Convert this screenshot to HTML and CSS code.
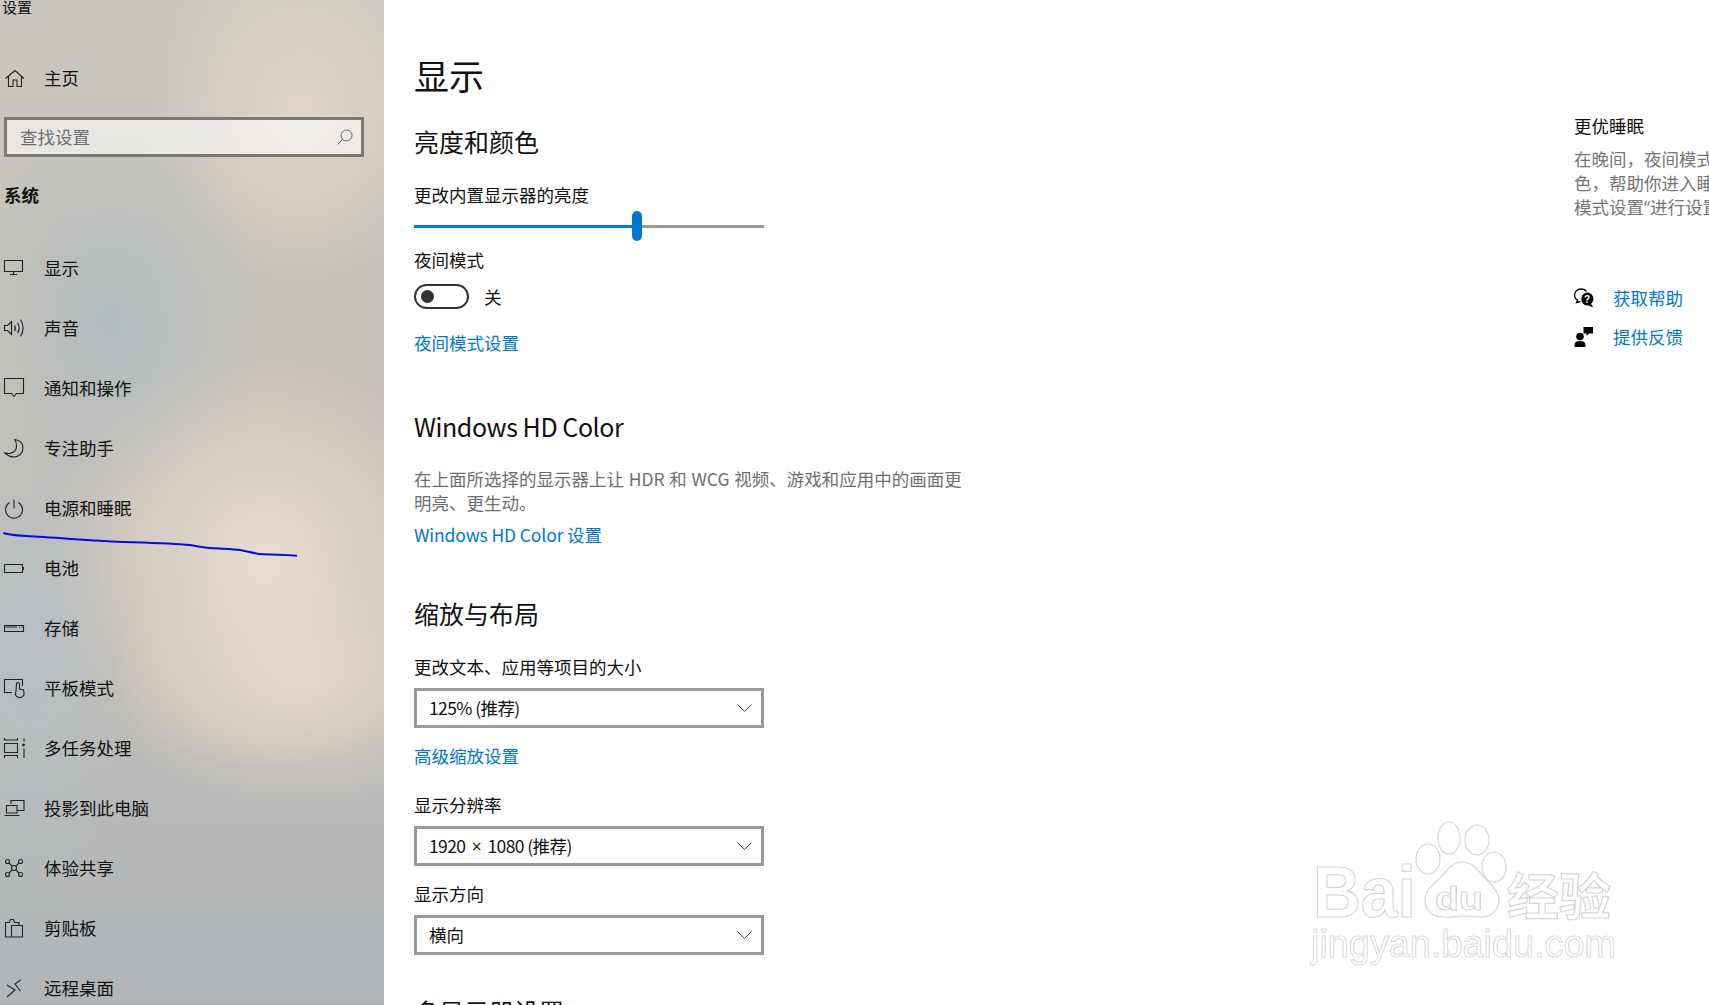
FILE: index.html
```html
<!DOCTYPE html>
<html lang="zh-CN">
<head>
<meta charset="utf-8">
<title>设置</title>
<link rel="stylesheet" href="styles.css">
</head>
<body>
<aside class="sidebar">
  <div class="app-title">设置</div>
  <div class="nav-item home">
    <svg class="icon" viewBox="0 0 20 20"><path d="M1.500 10.500 11 2.500l9 8M4.500 8.500v10H9V12h4v6.500h4.500v-10"/></svg>
    <span>主页</span>
  </div>
  <div class="search">
    <span>查找设置</span>
    <svg class="search-icon" viewBox="0 0 16 16"><circle cx="9.500" cy="6.500" r="5.500"/><path d="M5.500 10.500 0.500 15.500"/></svg>
  </div>
  <div class="group">系统</div>
  <nav class="nav">
    <div class="nav-item"><svg class="icon" viewBox="0 0 20 20"><path d="M.5 2.500h18v11H.5zM9.500 13.500v3M6 16.500h7"/></svg><span>显示</span></div>
    <div class="nav-item"><svg class="icon" viewBox="0 0 20 20"><path d="M.5 7.500h3l4-4v13l-4-4h-3zM10.500 7.500c1 1.500 1 4 0 5.500M13.500 5c2 3 2 7 0 10M16.500 1.500c3.500 5 3.500 12 0 17"/></svg><span>声音</span></div>
    <div class="nav-item"><svg class="icon" viewBox="0 0 20 20"><path d="M.5.500h19v15h-7L10 18.500l-2.500-3h-7z"/></svg><span>通知和操作</span></div>
    <div class="nav-item"><svg class="icon" viewBox="0 0 20 20"><path d="M11 1.500c5 1 8 4.500 8 8.500a9 9 0 0 1-9 9c-3.500 0-6.500-1.500-9-4 6.500 1.500 11.500-1 11.500-7 0-2.500-.5-4.500-1.500-6.500z"/></svg><span>专注助手</span></div>
    <div class="nav-item"><svg class="icon" viewBox="0 0 20 20"><path d="M10 1.500v9M5.500 4.500a8.500 8.500 0 1 0 9 0"/></svg><span>电源和睡眠</span></div>
    <div class="nav-item"><svg class="icon" viewBox="0 0 20 20"><path d="M.5 6.500h18v8H.5zM19.500 9v3"/></svg><span>电池</span></div>
    <div class="nav-item"><svg class="icon" viewBox="0 0 20 20"><path d="M.5 7.500h19v6H.5z"/><path class="thick" d="M1 9h12M15 9h1M17.500 9h1"/></svg><span>存储</span></div>
    <div class="nav-item"><svg class="icon" viewBox="0 0 20 20"><path d="M8 14.500H.5v-13h18V8M12 13.500c-2 3 .5 6 3.500 6s5-2 4.500-5l-.5-2.500-4-1V6a1.500 1.500 0 0 0-3 0z"/></svg><span>平板模式</span></div>
    <div class="nav-item"><svg class="icon" viewBox="0 0 20 20"><path d="M.5 0v2h13V0M.5 5.500h13v9H.5zM0 17.500h14M.5 17.500V20M13.500 17.500V20M20 .5v3M20 10.500V20"/><circle class="dot" cx="19.500" cy="7" r="1.400"/></svg><span>多任务处理</span></div>
    <div class="nav-item"><svg class="icon" viewBox="0 0 20 20"><path d="M7 6V2.500h13v10h-6.500M2.500 7.500h10.500v7.500H2.500zM.5 17.500h15"/></svg><span>投影到此电脑</span></div>
    <div class="nav-item"><svg class="icon" viewBox="0 0 20 20"><circle cx="3.500" cy="3.500" r="2"/><circle cx="16.500" cy="3.500" r="2"/><circle cx="3.500" cy="16.500" r="2"/><circle cx="16.500" cy="16.500" r="2"/><circle cx="10" cy="10" r="2.500"/><path d="M5 5l3 3M15 5l-3 3M5 15l3-3M15 15l-3-3"/></svg><span>体验共享</span></div>
    <div class="nav-item"><svg class="icon" viewBox="0 0 20 20"><path d="M7.500 7.500h11v11.500h-11zM7.500 19h-6V4.500h4l1-3h3l1 3h4.500v3"/></svg><span>剪贴板</span></div>
    <div class="nav-item"><svg class="icon" viewBox="0 0 20 20"><path d="M3 7l8 5-8 7M16.500 2 11 6l5.500 7"/></svg><span>远程桌面</span></div>
  </nav>
</aside>

<main class="main">
  <div class="content">
    <h1 class="title">显示</h1>
    <h2 class="heading first">亮度和颜色</h2>
    <div class="label m-k">更改内置显示器的亮度</div>
    <div class="slider">
      <div class="slider-fill"></div>
      <div class="slider-thumb"></div>
      <div class="slider-rest"></div>
    </div>
    <div class="label m-b">夜间模式</div>
    <div class="toggle-row">
      <div class="toggle"><div class="knob"></div></div>
      <span class="label">关</span>
    </div>
    <a class="link m-c">夜间模式设置</a>

    <h2 class="heading m-d latin-heading">Windows HD Color</h2>
    <p class="desc">在上面所选择的显示器上让 HDR 和 WCG 视频、游戏和应用中的画面更<br>明亮、更生动。</p>
    <a class="link m-e latin-link">Windows HD Color 设置</a>

    <h2 class="heading m-f">缩放与布局</h2>
    <div class="label m-a">更改文本、应用等项目的大小</div>
    <div class="select m-g"><span class="value">125% (推荐)</span><svg class="chev" viewBox="0 0 15 8"><path d="M.5.500l7 7 7-7"/></svg></div>
    <a class="link m-l">高级缩放设置</a>
    <div class="label m-a">显示分辨率</div>
    <div class="select m-g"><span class="value">1920 <span class="lat times">×</span> 1080 (推荐)</span><svg class="chev" viewBox="0 0 15 8"><path d="M.5.500l7 7 7-7"/></svg></div>
    <div class="label m-h">显示方向</div>
    <div class="select m-g"><span>横向</span><svg class="chev" viewBox="0 0 15 8"><path d="M.5.500l7 7 7-7"/></svg></div>
    <h2 class="heading m-j">多显示器设置</h2>
  </div>

  <aside class="side">
    <div class="side-title">更优睡眠</div>
    <div class="side-desc">
      <div>在晚间，夜间模式会显示暖</div>
      <div>色，帮助你进入睡眠。选择“夜间</div>
      <div>模式设置<span class="lat">“</span>进行设置。</div>
    </div>
    <div class="help-row first-help">
      <svg class="help-icon" viewBox="0 0 20 20"><path class="outline" d="M6.500 13.500 2.500 14.500l1-2.500C1 10.500.5 8.500.5 7c0-3.500 3-6 6.500-6 2.500 0 4.500 1 5.500 2.500"/><path d="M13 4.500a6.500 6.500 0 0 1 4 11.500l2.500 3.500-5-2a6.500 6.500 0 1 1-1.500-13z"/><text class="qmark" x="13" y="15">?</text></svg>
      <a class="link">获取帮助</a>
    </div>
    <div class="help-row second-help">
      <svg class="help-icon" viewBox="0 0 20 20"><circle cx="6" cy="9.500" r="3.800"/><path d="M.5 20v-2c0-2.500 2-4 5.500-4s5.500 1.500 5.500 4v2zM9.500 0H19v6.500h-4l-2.500 2.500V6.500h-3z"/></svg>
      <a class="link">提供反馈</a>
    </div>
  </aside>
</main>

<svg class="ink" viewBox="0 0 300 30"><path d="M3.300 3C10 5 15 5.400 23 5.700 50 7 85 10.500 117 11.700 140 12.500 170 13 190 15 197 16.500 200 17 207 17.700 220 18.800 232 19 240 20 250 21.500 255 24 263 24.300 275 24.500 285 25 297 25.700"/></svg>

<svg class="watermark" viewBox="0 0 360 215">
  <g class="wm-shape">
    <ellipse cx="169" cy="48" rx="11" ry="16"/>
    <ellipse cx="197" cy="50" rx="12" ry="15"/>
    <ellipse cx="148" cy="69" rx="12" ry="15"/>
    <ellipse cx="214" cy="77" rx="12" ry="15"/>
    <path d="M182 72c12 0 17 11 25 18 6 6 12 13 12 20 0 10-8 17-18 17-7 0-13-1-19-1s-11 2-19 1c-11 0-18-7-18-17 0-9 6-14 13-20 8-7 12-18 24-18z"/>
  </g>
  <text class="wm-big" x="33" y="127" textLength="103" lengthAdjust="spacingAndGlyphs">Bai</text>
  <text class="wm-du" x="155" y="120" textLength="48" lengthAdjust="spacingAndGlyphs">du</text>
  <text class="wm-cn" x="227" y="125" textLength="104" lengthAdjust="spacingAndGlyphs">经验</text>
  <text class="wm-url" x="31" y="167" textLength="305" lengthAdjust="spacingAndGlyphs">jingyan.baidu.com</text>
</svg>
</body>
</html>
```
FILE: styles.css
```css
* { box-sizing: border-box; }
html, body { margin: 0; height: 1005px; overflow: hidden; }
body {
  position: relative;
  display: flex;
  width: 1709px;
  background: #fff;
  color: #111;
  font: 17.5px/24px "Noto Sans CJK SC", "Noto Sans", sans-serif;
}

/* sidebar */
.sidebar {
  width: 384px;
  height: 1005px;
  flex: none;
  overflow: hidden;
  background:
    radial-gradient(ellipse 210px 210px at 265px 560px, #e8ddd0 0%, rgba(232,221,208,0) 100%),
    radial-gradient(ellipse 190px 130px at 300px 680px, #e0d6c6 0%, rgba(224,214,198,0) 100%),
    radial-gradient(ellipse 150px 180px at 300px 110px, #e0d6c9 0%, rgba(224,214,201,0) 100%),
    radial-gradient(ellipse 150px 210px at 110px 320px, #b3bcbe 0%, rgba(179,188,190,0) 100%),
    radial-gradient(ellipse 110px 260px at 30px 640px, #b6bfc3 0%, rgba(182,191,195,0) 100%),
    linear-gradient(180deg, #c9c7bf 0%, #c5c1ba 30%, #c6bfb8 50%, #c2bdb6 66%, #b8b9b9 80%, #b1b5b8 100%);
}
.app-title {
  height: 14px;
  padding-left: 2px;
  font-size: 15px;
  line-height: 14px;
}
.nav-item {
  display: flex;
  align-items: center;
  gap: 20px;
  height: 60px;
  padding-left: 4px;
}
.home { margin-top: 34px; }
.icon {
  width: 20px;
  height: 20px;
  flex: none;
  overflow: visible;
  fill: none;
  stroke: #222;
  stroke-width: 1.1;
}
.icon .thick { stroke-width: 1.500; stroke: #555; }
.icon .dot { fill: #222; stroke: none; }
.search {
  display: flex;
  align-items: center;
  justify-content: space-between;
  width: 360px;
  height: 40px;
  margin: 9px 0 0 4px;
  padding: 0 8px 0 13px;
  border: 3px solid #7b7977;
  background: rgba(255, 255, 255, 0.6);
  color: #6e6e6e;
}
.search-icon {
  width: 16px;
  height: 16px;
  fill: none;
  stroke: #666;
  stroke-width: 1;
}
.group {
  margin: 26px 0 0 4px;
  font-weight: 700;
}
.nav { margin-top: 31px; }

/* main */
.main {
  flex: 1;
  display: flex;
  justify-content: space-between;
  min-width: 0;
  height: 1005px;
  overflow: hidden;
  padding-left: 30px;
}
.content { width: 600px; padding-top: 52px; }
.title {
  margin: 0;
  font-size: 35px;
  font-weight: 400;
  line-height: 46px;
}
.heading {
  margin: 0;
  font-size: 25px;
  font-weight: 400;
  line-height: 34px;
}
.first { margin-top: 26px; }
.label { display: block; }
.link { display: block; color: #0078d4; }
.lat { font-family: "Open Sans", sans-serif; }
.times { margin: 0 3px; }
.latin-heading { letter-spacing: -0.42px; }
.latin-link { letter-spacing: -0.12px; }
.m-a { margin-top: 25px; }
.m-b { margin-top: 7px; }
.m-c { margin-top: 22px; }
.m-d { margin-top: 54px; }
.m-e { margin-top: 8px; }
.m-f { margin-top: 49px; }
.m-g { margin-top: 9px; }
.m-h { margin-top: 16px; }
.m-j { margin-top: 39px; }
.m-k { margin-top: 25px; }
.m-l { margin-top: 16px; }

.slider {
  display: flex;
  align-items: center;
  width: 350px;
  height: 30px;
  margin-top: 4px;
}
.slider-fill { width: 218px; height: 3px; background: #0078d4; }
.slider-thumb { width: 10px; height: 30px; border-radius: 5px; background: #0078d4; }
.slider-rest { flex: 1; height: 3px; background: #999; }

.toggle-row {
  display: flex;
  align-items: center;
  gap: 15px;
  height: 25px;
  margin-top: 12px;
}
.toggle {
  display: flex;
  align-items: center;
  width: 55px;
  height: 25px;
  padding-left: 5px;
  border: 2px solid #333;
  border-radius: 13px;
}
.knob { width: 13px; height: 13px; border-radius: 50%; background: #333; }

.desc {
  margin: 24px 0 0;
  color: #6f6f6f;
  white-space: nowrap;
  word-spacing: 0.8px;
}
.select {
  display: flex;
  align-items: center;
  justify-content: space-between;
  width: 350px;
  height: 40px;
  padding: 0 9px 0 12px;
  border: 3px solid #999;
}
.value { letter-spacing: -0.6px; }
.chev {
  width: 15px;
  height: 8px;
  fill: none;
  stroke: #444;
  stroke-width: 1;
}

/* right column */
.side {
  width: 135px;
  flex: none;
  padding-top: 114px;
  white-space: nowrap;
}
.side-desc {
  margin-top: 9px;
  color: #767676;
}
.help-row {
  display: flex;
  align-items: center;
  gap: 19px;
  height: 40px;
}
.first-help { margin-top: 59px; }
.second-help { margin-top: -1px; }
.help-icon {
  width: 20px;
  height: 20px;
  flex: none;
  fill: #000;
  overflow: visible;
}
.help-icon .outline { fill: none; stroke: #000; stroke-width: 1.300; }
.help-icon .qmark {
  fill: #fff;
  font: 700 10px "Liberation Sans", sans-serif;
  text-anchor: middle;
}

/* overlays */
.ink {
  position: absolute;
  left: 0;
  top: 530px;
  width: 300px;
  height: 30px;
  fill: none;
  stroke: #0808e8;
  stroke-width: 2;
}
.watermark {
  position: absolute;
  right: 69px;
  bottom: 0;
  width: 360px;
  height: 215px;
  fill: #fff;
  stroke: #d6d6d6;
  stroke-width: 1.200;
  filter: blur(0.4px);
}
.wm-shape { fill: #fff; }
.wm-big { font: 700 72px "Liberation Sans", sans-serif; }
.wm-du { font: 700 34px "Liberation Sans", sans-serif; }
.wm-cn { font: 700 50px "Noto Sans CJK SC", sans-serif; }
.wm-url { font: 400 38px "Liberation Sans", sans-serif; stroke: #dedede; }
```
